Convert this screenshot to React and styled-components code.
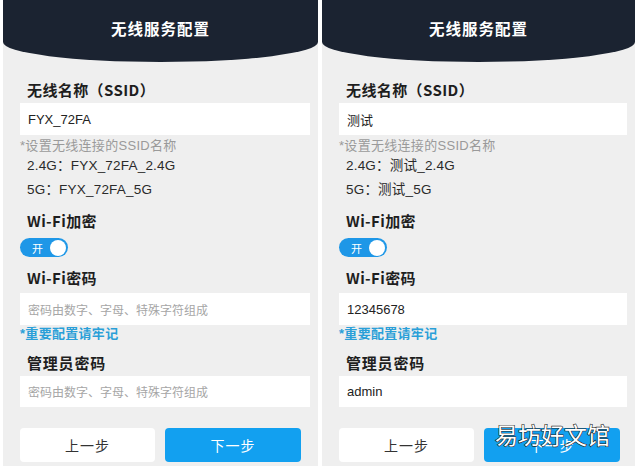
import styled, { createGlobalStyle } from "styled-components";

const GlobalStyle = createGlobalStyle`
  html, body {
    margin: 0;
    padding: 0;
    background: #ffffff;
  }
  body {
    font-family: "Liberation Sans", "Noto Sans CJK SC", sans-serif;
  }
`;

const screens = [
  {
    ssid: "FYX_72FA",
    wifiPassword: "",
    adminPassword: "",
    watermark: false,
  },
  {
    ssid: "测试",
    wifiPassword: "12345678",
    adminPassword: "admin",
    watermark: true,
  },
];

const PLACEHOLDER = "密码由数字、字母、特殊字符组成";

const Phone = ({ screen }) => (
  <StyledPanel $width={screen.watermark ? 313 : 315}>
    <StyledHeader>无线服务配置</StyledHeader>
    <StyledBody>
      <StyledLabel $top={18}>无线名称（SSID）</StyledLabel>
      <StyledField $top={3} $height={32}>
        {screen.ssid}
      </StyledField>
      <StyledHint $top={3}>*设置无线连接的SSID名称</StyledHint>
      <StyledInfo $top={2}>2.4G：{screen.ssid}_2.4G</StyledInfo>
      <StyledInfo $top={4}>5G：{screen.ssid}_5G</StyledInfo>
      <StyledLabel $top={11}>Wi-Fi加密</StyledLabel>
      <StyledToggle>
        <span>开</span>
        <i />
      </StyledToggle>
      <StyledLabel $top={11}>Wi-Fi密码</StyledLabel>
      <StyledField $top={5} $height={32} $empty={!screen.wifiPassword}>
        {screen.wifiPassword || PLACEHOLDER}
      </StyledField>
      <StyledHint $top={1} $blue>
        *重要配置请牢记
      </StyledHint>
      <StyledLabel $top={11} $spaced>
        管理员密码
      </StyledLabel>
      <StyledField $top={3} $height={31} $empty={!screen.adminPassword}>
        {screen.adminPassword || PLACEHOLDER}
      </StyledField>
      <StyledButtons>
        <StyledButton>上一步</StyledButton>
        <StyledButton $primary>下一步</StyledButton>
      </StyledButtons>
    </StyledBody>
    {screen.watermark && <StyledWatermark>易坊好文馆</StyledWatermark>}
  </StyledPanel>
);

const App = () => (
  <>
    <GlobalStyle />
    <StyledPage>
      {screens.map((screen, i) => (
        <Phone key={i} screen={screen} />
      ))}
    </StyledPage>
  </>
);

const StyledPage = styled.div`
  display: flex;
  gap: 4px;
  padding-left: 3px;
  width: 640px;
  height: 466px;
  box-sizing: border-box;
  overflow: hidden;
`;

const StyledPanel = styled.div`
  position: relative;
  width: ${(p) => p.$width}px;
  height: 466px;
  background: #efefef;
  overflow: hidden;
`;

const StyledHeader = styled.div`
  height: 62px;
  background: #1b2331;
  border-radius: 0 0 50% 50% / 0 0 20px 20px;
  color: #ffffff;
  font-family: "Noto Sans CJK SC", sans-serif;
  font-weight: 700;
  font-size: 15.5px;
  letter-spacing: 1px;
  display: flex;
  justify-content: center;
  padding-top: 18px;
  line-height: 20px;
  box-sizing: border-box;
`;

const StyledBody = styled.div`
  display: flex;
  flex-direction: column;
  padding: 0 8px 0 17px;
`;

const StyledLabel = styled.div`
  margin-top: ${(p) => p.$top}px;
  padding-left: 7px;
  font-family: "Noto Sans CJK SC", sans-serif;
  font-size: 15px;
  font-weight: 700;
  line-height: 20px;
  color: #1e1e1e;
  letter-spacing: ${(p) => (p.$spaced ? "0.8px" : "0.4px")};
`;

const StyledField = styled.div`
  margin-top: ${(p) => p.$top}px;
  height: ${(p) => p.$height}px;
  background: #ffffff;
  display: flex;
  align-items: center;
  padding-left: 8px;
  font-size: ${(p) => (p.$empty ? "12px" : "13px")};
  color: ${(p) => (p.$empty ? "#a6a6a6" : "#222222")};
`;

const StyledHint = styled.div`
  margin-top: ${(p) => p.$top}px;
  font-size: 13px;
  line-height: 16px;
  color: ${(p) => (p.$blue ? "#2a9fd8" : "#9a9a9a")};
  font-weight: ${(p) => (p.$blue ? 700 : 400)};
  letter-spacing: 0.3px;
`;

const StyledInfo = styled.div`
  margin-top: ${(p) => p.$top}px;
  padding-left: 7px;
  font-size: 13.5px;
  line-height: 20px;
  color: #2a2a2a;
  letter-spacing: 0.2px;
`;

const StyledToggle = styled.div`
  margin-top: 7px;
  width: 48px;
  height: 19px;
  border-radius: 10px;
  background: #1e97e7;
  display: flex;
  align-items: center;
  justify-content: space-between;
  padding: 0 2px 0 12px;
  box-sizing: border-box;
  span {
    color: #ffffff;
    font-size: 11px;
    font-family: "Noto Sans CJK SC", sans-serif;
  }
  i {
    width: 16px;
    height: 16px;
    border-radius: 50%;
    background: #ffffff;
  }
`;

const StyledButtons = styled.div`
  margin-top: 21px;
  display: grid;
  grid-template-columns: 135px 136px;
  gap: 10px;
`;

const StyledButton = styled.div`
  height: 34px;
  border-radius: 4px;
  background: ${(p) => (p.$primary ? "#12a0f0" : "#ffffff")};
  color: ${(p) => (p.$primary ? "#ffffff" : "#333333")};
  font-family: "Noto Sans CJK SC", sans-serif;
  font-size: 14px;
  letter-spacing: 1px;
  display: flex;
  align-items: center;
  justify-content: center;
`;

const StyledWatermark = styled.div`
  position: absolute;
  left: 173px;
  top: 417px;
  font-family: "Noto Sans CJK SC", sans-serif;
  font-size: 23px;
  color: #ffffff;
  -webkit-text-stroke: 1.2px #222222;
  paint-order: stroke fill;
`;

export default App;
